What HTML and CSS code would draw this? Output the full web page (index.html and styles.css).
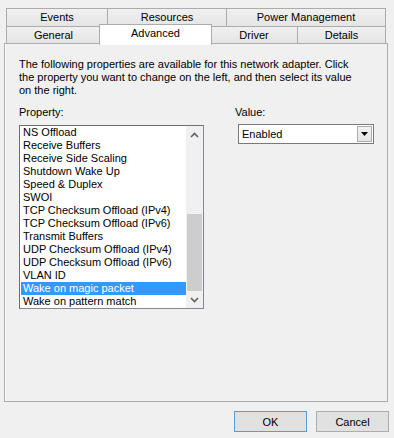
FILE: index.html
```html
<!DOCTYPE html>
<html lang="en">
<head>
    <meta charset="UTF-8">
    <title>Adapter Properties</title>
    <link rel="stylesheet" href="styles.css">
</head>
<body>
    <div class="dialog">
        <div class="tabs">
            <div class="tab-row">
                <div class="tab tab-events">Events</div>
                <div class="tab tab-resources">Resources</div>
                <div class="tab tab-power">Power Management</div>
            </div>
            <div class="tab-row">
                <div class="tab tab-general">General</div>
                <div class="tab tab-advanced active">Advanced</div>
                <div class="tab tab-driver">Driver</div>
                <div class="tab tab-details">Details</div>
            </div>
        </div>

        <div class="panel">
            <p class="intro">The following properties are available for this network adapter. Click<br>the property you want to change on the left, and then select its value on the right.</p>

            <div class="columns">
                <div class="property-col">
                    <div class="label">Property:</div>
                    <div class="listbox">
                        <ul class="items">
                            <li>NS Offload</li>
                            <li>Receive Buffers</li>
                            <li>Receive Side Scaling</li>
                            <li>Shutdown Wake Up</li>
                            <li>Speed &amp; Duplex</li>
                            <li>SWOI</li>
                            <li>TCP Checksum Offload (IPv4)</li>
                            <li>TCP Checksum Offload (IPv6)</li>
                            <li>Transmit Buffers</li>
                            <li>UDP Checksum Offload (IPv4)</li>
                            <li>UDP Checksum Offload (IPv6)</li>
                            <li>VLAN ID</li>
                            <li class="selected">Wake on magic packet</li>
                            <li>Wake on pattern match</li>
                        </ul>
                        <div class="scrollbar">
                            <div class="arrow">
                                <svg width="9" height="6" viewBox="0 0 9 6"><path d="M1 5 L4.5 1.5 L8 5" fill="none" stroke="#606060" stroke-width="1.6"/></svg>
                            </div>
                            <div class="track">
                                <div class="thumb"></div>
                            </div>
                            <div class="arrow">
                                <svg width="9" height="6" viewBox="0 0 9 6"><path d="M1 1 L4.5 4.5 L8 1" fill="none" stroke="#606060" stroke-width="1.6"/></svg>
                            </div>
                        </div>
                    </div>
                </div>

                <div class="value-col">
                    <div class="label">Value:</div>
                    <div class="combo">
                        <span class="combo-text">Enabled</span>
                        <span class="combo-button">
                            <svg width="7" height="4" viewBox="0 0 7 4"><path d="M0 0 H7 L3.5 4 Z" fill="#000"/></svg>
                        </span>
                    </div>
                </div>
            </div>
        </div>

        <div class="buttons">
            <button class="btn default">OK</button>
            <button class="btn">Cancel</button>
        </div>
    </div>
</body>
</html>
```

FILE: styles.css
```css
body {
    margin: 0;
    background-color: #f0f0f0;
    font-family: "Liberation Sans", Arial, sans-serif;
    font-size: 11px;
    color: #000;
}
.dialog {
    width: 394px;
    height: 438px;
    padding: 8px 0 0 0;
    box-sizing: border-box;
}

/* tab strip */
.tabs {
    margin-left: 6px;
    width: 381px;
}
.tab-row {
    display: flex;
}
.tab {
    box-sizing: border-box;
    height: 18px;
    margin-right: -1px;
    border: 1px solid #acacac;
    border-bottom: none;
    background: linear-gradient(#f0f0f0, #e5e5e5);
    text-align: center;
    line-height: 17px;
}
.tab-row + .tab-row .tab {
    height: 17px;
    line-height: 16px;
}
.tab-events { width: 102px; }
.tab-resources { width: 120px; }
.tab-power { width: 160px; }
.tab-general { width: 95px; }
.tab-advanced { width: 112px; }
.tab-driver { width: 88px; }
.tab-details { width: 89px; }
.tab-row .tab.active {
    position: relative;
    z-index: 2;
    height: 21px;
    margin-top: -2px;
    margin-bottom: -2px;
    margin-left: -1px;
    margin-right: -2px;
    width: 113px;
    background: #fff;
    line-height: 16px;
}

/* page */
.panel {
    position: relative;
    z-index: 1;
    margin-left: 4px;
    width: 384px;
    height: 359px;
    box-sizing: border-box;
    border: 1px solid #acacac;
    background-color: #f0f0f0;
    box-shadow: inset 1px 0 0 #fff;
    padding: 14px 14px 0 14px;
}
.intro {
    margin: 0;
    line-height: 13px;
    width: 345px;
}
.columns {
    display: flex;
    margin-top: 9px;
}
.label {
    line-height: 13px;
    height: 13px;
}
.property-col .label {
    margin-bottom: 6px;
}
.value-col {
    margin-left: 31px;
}
.value-col .label {
    margin-bottom: 5px;
}

/* list box */
.listbox {
    display: flex;
    width: 185px;
    height: 184px;
    box-sizing: border-box;
    border: 1px solid #828790;
    border-top-color: #6e6e6e;
    border-left-color: #6e6e6e;
    background: #fff;
}
.items {
    list-style: none;
    margin: 0;
    padding: 0 0 0 1px;
    flex: 1;
}
.items li {
    height: 13px;
    line-height: 13px;
    padding-left: 2px;
    white-space: nowrap;
    color: #000;
}
.items li.selected {
    background-color: #3399ff;
    color: #fff;
}
.scrollbar {
    width: 17px;
    display: flex;
    flex-direction: column;
    background: #f0f0f0;
}
.arrow {
    height: 17px;
    display: flex;
    align-items: center;
    justify-content: center;
}
.track {
    flex: 1;
    display: flex;
    flex-direction: column;
    justify-content: flex-end;
}
.thumb {
    height: 77px;
    margin: 0 1px;
    background: #cdcdcd;
}

/* combo box */
.combo {
    display: flex;
    align-items: center;
    justify-content: space-between;
    margin-left: 3px;
    width: 136px;
    height: 20px;
    box-sizing: border-box;
    border: 1px solid #7a7a7a;
    background: #fff;
    padding: 1px 1px 1px 3px;
}
.combo-button {
    width: 15px;
    height: 16px;
    box-sizing: border-box;
    border: 1px solid #adadad;
    background: linear-gradient(#f2f2f2, #e5e5e5);
    display: flex;
    align-items: center;
    justify-content: center;
}

/* dialog buttons */
.buttons {
    display: flex;
    justify-content: flex-end;
    gap: 9px;
    padding: 9px 5px 0 0;
}
.btn {
    width: 73px;
    height: 21px;
    border: 1px solid #adadad;
    background: #e1e1e1;
    font-family: "Liberation Sans", Arial, sans-serif;
    font-size: 11px;
    color: #000;
    padding: 0;
}
.btn.default {
    border: 1px solid #5b9bd5;
}
```
